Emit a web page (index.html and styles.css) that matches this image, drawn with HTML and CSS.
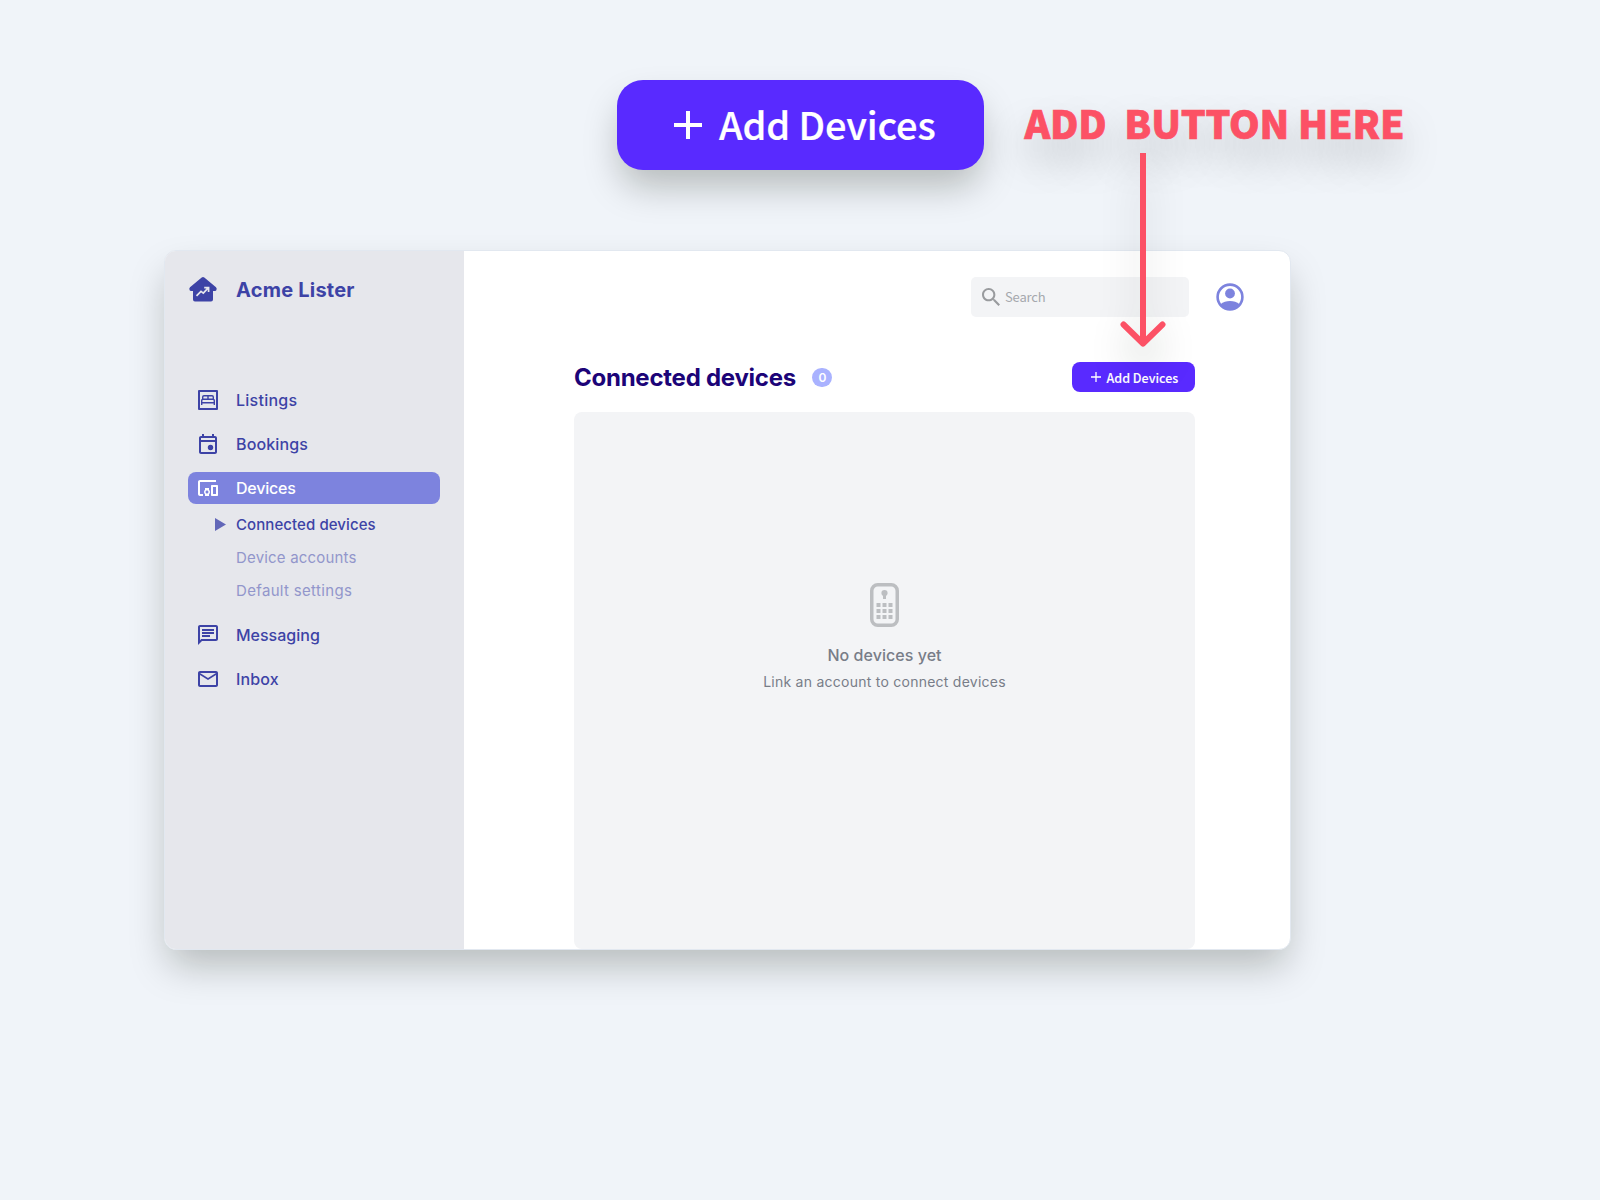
FILE: index.html
```
<!DOCTYPE html>
<html lang="en">
<head>
<meta charset="utf-8">
<title>Acme Lister</title>
<link rel="stylesheet" href="styles.css">
</head>
<body>
<div class="canvas">
  <div class="callout">
    <button class="big-button">
      <svg class="big-plus" viewBox="0 0 30 30"><path d="M15 1v28M1 15h28" stroke="currentColor" stroke-width="4" fill="none"/></svg>
      <span class="big-label">Add Devices</span>
    </button>
    <div class="note">ADD&nbsp; BUTTON HERE</div>
  </div>

  <div class="window">
    <aside class="sidebar">
      <div class="brand">
        <svg class="brand-icon" viewBox="0 0 28 25"><path d="M12.700 .6Q14-.5 15.300 .6L27 10.200Q28.400 11.600 27.200 13.400Q26.700 14 24 14V22.500Q24 24.500 22 24.500H6Q4 24.500 4 22.500V14Q1.300 14 .8 13.400Q-.4 11.600 1 10.200Z" fill="currentColor"/><path d="M7.500 18.800L12 14.400L14.300 16.200L19 11.200M15.200 10.700H19.600V15" fill="none" stroke="#e6e7ec" stroke-width="1.700"/></svg>
        <span class="brand-name">Acme Lister</span>
      </div>
      <nav class="nav">
        <a class="item"><svg class="icon" viewBox="0 0 24 24"><path fill="none" stroke="currentColor" stroke-width="2" d="M3 3h18v18H3z" stroke-linejoin="round"/><path fill="none" stroke="currentColor" stroke-width="1.400" d="M6.700 11V9q0-1.300 1.300-1.300h8q1.300 0 1.300 1.300v2M12 8v3M5.700 17v-4.500q0-1.300 1.300-1.300h10q1.300 0 1.300 1.300V17M5.700 14.800h12.600"/></svg><span class="t-listings">Listings</span></a>
        <a class="item"><svg class="icon" viewBox="0 0 24 24"><path fill="currentColor" d="M19 4h-1V2h-2v2H8V2H6v2H5c-1.100 0-2 .9-2 2v14c0 1.100.9 2 2 2h14c1.100 0 2-.9 2-2V6c0-1.100-.9-2-2-2zm0 16H5V10h14v10zm0-12H5V6h14v2z"/><circle cx="14.500" cy="15.500" r="2.700" fill="currentColor"/></svg><span class="t-bookings">Bookings</span></a>
        <a class="item active"><svg class="icon" viewBox="0 0 24 24"><path fill="currentColor" fill-rule="evenodd" d="M4 6h16V4H4c-1.100 0-2 .9-2 2v12c0 1.100.9 2 2 2h3v-2H4V6zm9 6H9v1.780c-.61.55-1 1.330-1 2.220s.39 1.670 1 2.220V20h4v-1.780c.61-.55 1-1.340 1-2.220s-.39-1.670-1-2.220V12zm-2 5.500c-.83 0-1.500-.67-1.500-1.500s.67-1.500 1.500-1.500 1.500.67 1.500 1.500-.67 1.500-1.500 1.500zM21.200 9h-5.400c-.5 0-.8.300-.8.800v9.400c0 .5.300.8.800.8h5.400c.5 0 .8-.3.800-.8V9.800c0-.5-.3-.8-.8-.8zM20 18h-3v-7h3v7z"/></svg><span class="t-devices">Devices</span></a>
        <div class="subnav">
          <a class="subitem current"><svg class="marker" viewBox="0 0 11 13"><path d="M0 0L11 6.500L0 13Z" fill="currentColor"/></svg><span class="t-connected">Connected devices</span></a>
          <a class="subitem"><span class="t-accounts">Device accounts</span></a>
          <a class="subitem"><span class="t-defaults">Default settings</span></a>
        </div>
        <a class="item"><svg class="icon" viewBox="0 0 24 24"><path fill="currentColor" d="M4 4h16v12H5.170L4 17.170V4m0-2c-1.100 0-1.990.9-1.990 2L2 22l4-4h14c1.100 0 2-.9 2-2V4c0-1.100-.9-2-2-2H4zm2 10h8v2H6v-2zm0-3h12v2H6V9zm0-3h12v2H6V6z"/></svg><span class="t-messaging">Messaging</span></a>
        <a class="item"><svg class="icon" viewBox="0 0 24 24"><path fill="currentColor" d="M22 6c0-1.100-.9-2-2-2H4c-1.100 0-2 .9-2 2v12c0 1.100.9 2 2 2h16c1.100 0 2-.9 2-2V6zm-2 0l-8 5-8-5h16zm0 12H4V8l8 5 8-5v10z"/></svg><span class="t-inbox">Inbox</span></a>
      </nav>
    </aside>

    <main class="main">
      <header class="topbar">
        <div class="search">
          <svg class="search-icon" viewBox="3 3 17.500 17.500"><path fill="currentColor" d="M15.500 14h-.79l-.28-.27C15.410 12.590 16 11.110 16 9.500 16 5.910 13.090 3 9.500 3S3 5.910 3 9.500 5.910 16 9.500 16c1.610 0 3.090-.59 4.230-1.570l.27.28v.79l5 4.990L20.490 19l-4.990-5zm-6 0C7.010 14 5 11.990 5 9.500S7.010 5 9.500 5 14 7.010 14 9.500 11.990 14 9.500 14z"/></svg>
          <span class="search-text">Search</span>
        </div>
        <svg class="avatar" viewBox="0 0 28 28"><circle cx="14" cy="14" r="12.400" fill="none" stroke="currentColor" stroke-width="2.600"/><circle cx="14" cy="10.500" r="4.900" fill="currentColor"/><path d="M4.500 21.300Q8.500 18 14 18T23.500 21.300Q20 26.500 14 26.500T4.500 21.300Z" fill="currentColor"/></svg>
      </header>
      <div class="heading-row">
        <h1 class="heading">Connected devices</h1>
        <span class="count">0</span>
        <button class="add-button">
          <svg class="small-plus" viewBox="0 0 10 10"><path d="M5 0v10M0 5h10" stroke="currentColor" stroke-width="1.300" fill="none"/></svg>
          <span class="add-label">Add Devices</span>
        </button>
      </div>
      <section class="panel">
        <svg class="remote" viewBox="0 0 29 44"><rect x="1.750" y="1.750" width="25.500" height="40.500" rx="6" fill="none" stroke="currentColor" stroke-width="3.500"/><circle cx="14.500" cy="10" r="3.100" fill="currentColor"/><path d="M13 11h3v5h-3zM6.500 20h4v4h-4zM12.500 20h4v4h-4zM18.500 20h4v4h-4zM6.500 26h4v4h-4zM12.500 26h4v4h-4zM18.500 26h4v4h-4zM6.500 32h4v4h-4zM12.500 32h4v4h-4zM18.500 32h4v4h-4z" fill="currentColor"/></svg>
        <p class="empty-title">No devices yet</p>
        <p class="empty-text">Link an account to connect devices</p>
      </section>
    </main>
  </div>

  <svg class="arrow" viewBox="0 0 46 200"><path d="M23 3V191" stroke="#fc5165" stroke-width="6" fill="none"/><path d="M3.500 174.500L23 193.500L42.500 174.500" stroke="#fc5165" stroke-width="6" stroke-linecap="round" stroke-linejoin="round" fill="none"/></svg>
</div>
</body>
</html>
```
FILE: styles.css
```
* { box-sizing: border-box; }
body { margin: 0; background: #f0f4f9; font-family: Inter, "Liberation Sans", sans-serif; }
button { border: 0; margin: 0; padding: 0; }
svg { display: block; flex: none; overflow: visible; }
span, .note, .heading, p { white-space: nowrap; }

.canvas { position: relative; width: 1600px; height: 1200px; padding: 80px 0 0 164px; overflow: hidden; }
.callout { display: flex; height: 170px; padding-left: 452.500px; align-items: flex-start; }
.big-button, .note, .add-button, .search { font-family: "Noto Sans CJK JP", "Noto Sans", sans-serif; }
.big-button {
  display: flex; align-items: center; width: 367px; height: 90px; padding-left: 56.500px; gap: 16px;
  border-radius: 26px; background: #592aff; color: #fff; box-shadow: 0 20px 36px -4px rgba(8, 16, 0, .25);
}
.big-plus { width: 30px; height: 30px; }
.big-label { font-size: 38px; font-weight: 500; line-height: 90px; height: 92px; letter-spacing: -.15px; -webkit-text-stroke: .2px; }
.note {
  height: 90px; margin: -3px 0 0 41px; line-height: 90px; font-size: 39px; font-weight: 900; color: #fc5165;
  letter-spacing: -.15px; -webkit-text-stroke: .7px #fc5165; text-shadow: 0 20px 40px rgba(8, 16, 0, .25);
}

.window {
  display: flex; width: 1127px; height: 700px; border: 1px solid #e2e8f0; border-radius: 12px;
  overflow: hidden; background: #fff; box-shadow: 0 20px 38px -5px rgba(8, 16, 0, .25);
}
.sidebar { width: 299px; padding: 22px 23px 0; background: #e6e7ec; color: #3d43a6; flex: none; margin: -1px 0 -1px 0; }
.brand { display: flex; align-items: center; height: 34px; gap: 19px; padding-left: 1px; }
.brand-icon { width: 28px; height: 25px; }
.brand-name { font-size: 20px; font-weight: 700; letter-spacing: .22px; padding-top: 1px; }
.nav { display: flex; flex-direction: column; gap: 12px; margin-top: 78px; }
.item { display: flex; align-items: center; height: 32px; width: 252px; padding-left: 8px; gap: 16px; border-radius: 8px; font-size: 16px; font-weight: 500; }
.icon { width: 24px; height: 24px; }
.active { background: #7d83de; color: #fff; }
.t-listings { letter-spacing: .25px; }
.t-bookings { letter-spacing: .12px; }
.t-devices { letter-spacing: -.2px; }
.t-connected { letter-spacing: .08px; }
.t-accounts { letter-spacing: .18px; }
.t-defaults { letter-spacing: .33px; }
.t-inbox { letter-spacing: .15px; }
.subnav { display: flex; flex-direction: column; margin: -8px 0 0; }
.subitem { display: flex; align-items: center; height: 33px; padding-left: 48px; font-size: 15px; font-weight: 400; color: #9296cb; }
.current { padding-left: 27px; gap: 10px; color: #3d43a6; font-weight: 500; }
.marker { width: 11px; height: 13px; color: #6267b8; }

.main { flex: 1; display: flex; flex-direction: column; padding: 26px 46px 0 110px; }
.topbar { display: flex; justify-content: flex-end; align-items: center; gap: 27px; height: 40px; }
.search { display: flex; align-items: center; width: 218px; height: 40px; border-radius: 5px; padding-left: 11px; gap: 5px; background: #f3f4f6; color: #999b9e; }
.search-icon { width: 18px; height: 18px; }
.search-text { font-size: 13px; color: #a5a8ad; font-weight: 400; letter-spacing: -.15px; padding-bottom: 2px; }
.avatar { width: 28px; height: 28px; color: #7d83de; }
.heading-row { display: flex; align-items: center; width: 621px; height: 30px; margin-top: 45.400px; }
.heading { margin: 0; font-size: 24px; font-weight: 700; color: #1c0478; letter-spacing: -.25px; }
.count { display: flex; align-items: center; justify-content: center; width: 20px; height: 19px; margin-left: 16.500px; border-radius: 10px; background: #a9b2ff; color: #fff; font-size: 12px; font-weight: 600; }
.add-button { display: flex; align-items: center; width: 123px; height: 30px; margin-left: auto; padding-left: 19px; gap: 5.500px; border-radius: 8px; background: #592aff; color: #fff; }
.small-plus { width: 10px; height: 10px; }
.add-label { font-size: 12.500px; font-weight: 500; -webkit-text-stroke: .1px; }
.panel { display: flex; flex-direction: column; align-items: center; width: 621px; height: 537px; margin-top: 19.600px; padding-top: 171px; border-radius: 8px; background: #f3f4f6; flex: none; color: #787d88; }
.remote { width: 29px; height: 44px; color: #bcbec1; }
.empty-title { margin: 17px 0 0; font-size: 16px; line-height: 22px; font-weight: 500; letter-spacing: .05px; }
.empty-text { margin: 6px 0 0; font-size: 14px; line-height: 20px; letter-spacing: .25px; }

.arrow { position: absolute; left: 1119.500px; top: 150px; width: 46px; height: 200px; filter: drop-shadow(0 20px 18px rgba(8, 16, 0, .22)); }
```
